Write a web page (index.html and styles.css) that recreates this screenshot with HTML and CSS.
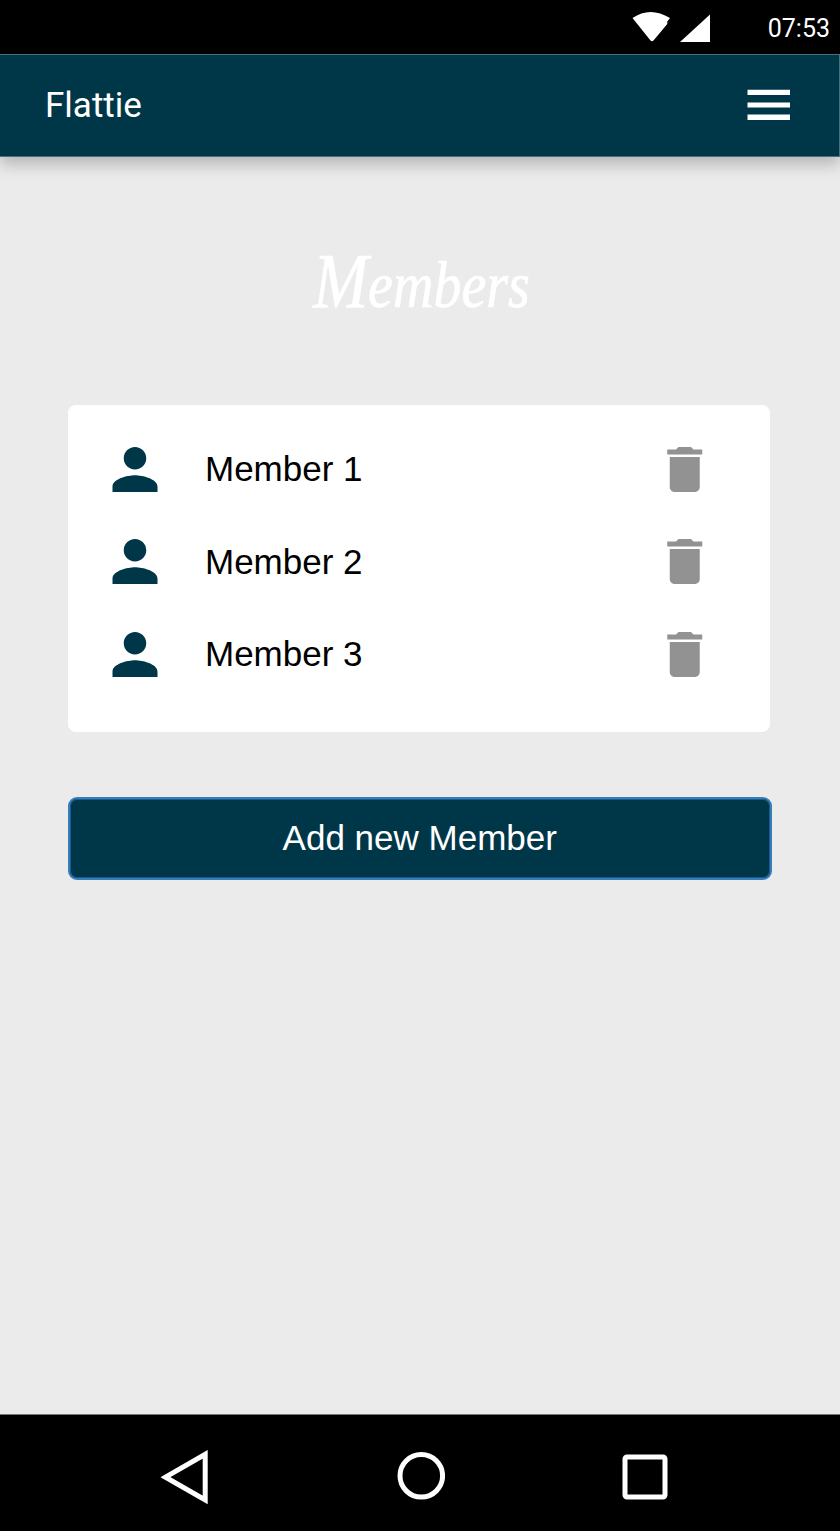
FILE: index.html
```html
<!DOCTYPE html>
<html lang="en">
<head>
<meta charset="utf-8">
<title>Flattie</title>
<link rel="stylesheet" href="styles.css">
</head>
<body>
<div class="screen">
  <div class="status">
    <svg class="signals" width="80" height="32" viewBox="0 0 80 32">
      <path fill="#fff" d="M2.5 7Q20 -5 40 7L37.3 10.5V13L23.5 29.5Q22 31 20.5 29.5Z"/>
      <path fill="#fff" d="M50 31L80 3.5V31Z"/>
    </svg>
    <span class="clock">07:53</span>
  </div>
  <header class="appbar">
    <span class="brand">Flattie</span>
    <svg width="43" height="32" viewBox="0 0 43 32">
      <path fill="#fff" d="M.5 1.7H43V7.1H.5ZM.5 14.4H43V19.6H.5ZM.5 26.6H43V32H.5Z"/>
    </svg>
  </header>
  <main class="content">
    <h1 class="title">Members</h1>
    <ul class="card">
      <li class="row">
        <svg class="person" viewBox="4 4 16 16"><path d="M12 12c2.21 0 4-1.79 4-4s-1.79-4-4-4-4 1.79-4 4 1.79 4 4 4zm0 2c-2.67 0-8 1.34-8 4v2h16v-2c0-2.66-5.33-4-8-4z"/></svg>
        <span class="name">Member 1</span>
        <svg class="trash" viewBox="5 3 14 18"><path d="M6 19c0 1.1.9 2 2 2h8c1.1 0 2-.9 2-2V7H6v12zM19 4h-3.5l-1-1h-5l-1 1H5v2h14V4z"/></svg>
      </li>
      <li class="row">
        <svg class="person" viewBox="4 4 16 16"><path d="M12 12c2.21 0 4-1.79 4-4s-1.79-4-4-4-4 1.79-4 4 1.79 4 4 4zm0 2c-2.67 0-8 1.34-8 4v2h16v-2c0-2.66-5.33-4-8-4z"/></svg>
        <span class="name">Member 2</span>
        <svg class="trash" viewBox="5 3 14 18"><path d="M6 19c0 1.1.9 2 2 2h8c1.1 0 2-.9 2-2V7H6v12zM19 4h-3.5l-1-1h-5l-1 1H5v2h14V4z"/></svg>
      </li>
      <li class="row">
        <svg class="person" viewBox="4 4 16 16"><path d="M12 12c2.21 0 4-1.79 4-4s-1.79-4-4-4-4 1.79-4 4 1.79 4 4 4zm0 2c-2.67 0-8 1.34-8 4v2h16v-2c0-2.66-5.33-4-8-4z"/></svg>
        <span class="name">Member 3</span>
        <svg class="trash" viewBox="5 3 14 18"><path d="M6 19c0 1.1.9 2 2 2h8c1.1 0 2-.9 2-2V7H6v12zM19 4h-3.5l-1-1h-5l-1 1H5v2h14V4z"/></svg>
      </li>
    </ul>
    <button class="add">Add new Member</button>
  </main>
  <nav class="navbar">
    <svg width="49" height="55" viewBox="0 0 49 55"><path fill="none" stroke="#fff" stroke-width="5" d="M5.5 27.2L45.2 4.3V49.9Z"/></svg>
    <svg width="48" height="48" viewBox="0 0 48 48"><circle cx="24.3" cy="23.8" r="21.3" fill="none" stroke="#fff" stroke-width="5"/></svg>
    <svg width="46" height="46" viewBox="0 0 46 46"><rect x="3" y="3" width="40" height="40" rx="2" fill="none" stroke="#fff" stroke-width="5"/></svg>
  </nav>
</div>
</body>
</html>
```
FILE: styles.css
```css
* { box-sizing: border-box; }
body { margin: 0; }
svg { display: block; flex: none; }
.screen {
  width: 840px;
  height: 1531px;
  display: flex;
  flex-direction: column;
  background: #ebebeb;
  font-family: "Liberation Sans", Arial, sans-serif;
}
.status {
  height: 54px;
  flex: none;
  display: flex;
  align-items: center;
  justify-content: flex-end;
  padding-right: 10px;
  background: #000;
  color: #fff;
}
.signals { margin-right: 57px; }
.clock {
  font: 25px/30px Roboto, sans-serif;
  width: 63px;
  text-align: right;
  padding-top: 4px;
}
.appbar {
  height: 103px;
  flex: none;
  display: flex;
  align-items: center;
  justify-content: space-between;
  padding: 0 50px 0 45px;
  background: #003748;
  border: 1px solid #48707c;
  border-left: 0;
  box-shadow: 0 8px 14px rgba(0, 0, 0, .22);
  color: #fff;
}
.appbar svg { margin: 0 -1px 3px 0; }
.brand { font: 35px/40px Roboto, sans-serif; }
.content {
  flex: 1;
  display: flex;
  flex-direction: column;
  padding: 88px 67.5px 0;
}
.title {
  margin: 0 0 79.5px;
  padding-left: 3px;
  height: 80px;
  text-align: center;
  color: #fff;
  font: italic 400 56px/80px "Liberation Serif", serif;
  -webkit-text-stroke: .6px #fff;
  transform: scaleY(1.18);
  transform-origin: 50% 80%;
}
.title::first-letter { font-size: 66px; }
.card {
  width: 702.5px;
  height: 327.5px;
  margin: 0 0 65px;
  padding: 18.5px 67.5px 0 44.5px;
  list-style: none;
  background: #fff;
  border-radius: 8px;
}
.row { display: flex; align-items: center; height: 92.5px; }
.person { width: 46px; height: 45px; fill: #003748; }
.name { flex: 1; margin-left: 47px; font-size: 35px; line-height: 40px; }
.trash { width: 35.5px; height: 45px; fill: #929292; }
.add {
  width: 704.5px;
  height: 82.5px;
  padding: 0 0 1px;
  border: 2px solid #347dbe;
  border-radius: 9px;
  box-shadow: inset 0 0 0 1px #1a5a83;
  background: #003748;
  color: #fff;
  font: 35px/40px "Liberation Sans", Arial, sans-serif;
}
.navbar {
  height: 117px;
  flex: none;
  display: flex;
  align-items: center;
  padding: 8px 0 0 160px;
  background: #000;
  border-top: 1px solid #777;
}
.navbar svg:nth-child(2) { margin: 0 177px 2px 188px; }
```
